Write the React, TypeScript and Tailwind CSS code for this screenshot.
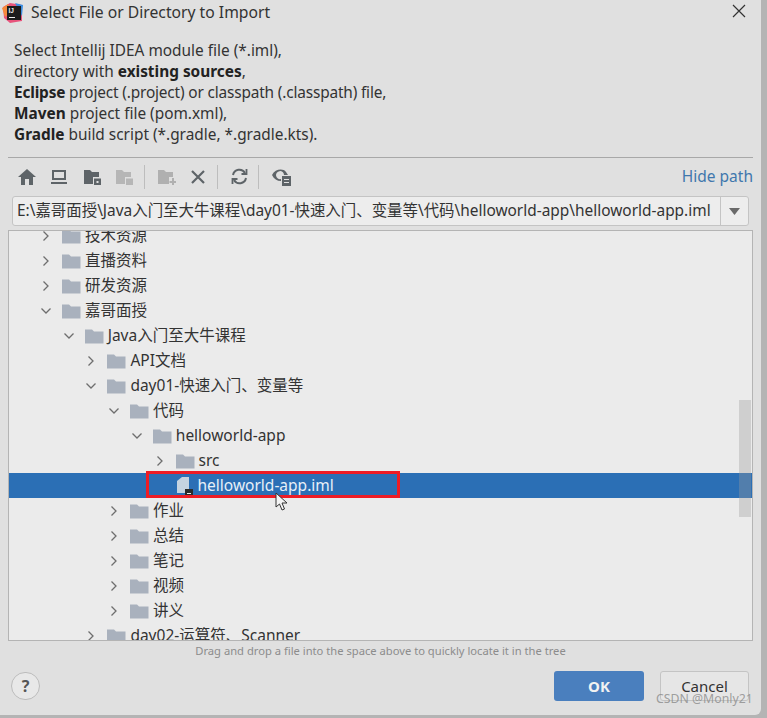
import React from "react";

const font = { fontFamily: '"Noto Sans", "Noto Sans CJK SC", sans-serif' };

const Folder = ({ x = 0 }: { x?: number }) => (
  <svg width="19" height="16" viewBox="0 0 19 16" className="shrink-0" style={{ marginLeft: x }}>
    <path d="M0 1.5 H7 L9 3.5 H18.5 V15.5 H0 Z" fill="#a9b1bd" />
  </svg>
);

const Chevron = ({ open }: { open: boolean }) => (
  <svg width="12" height="12" viewBox="0 0 12 12" className="shrink-0" fill="none" stroke="#6e6e6e" strokeWidth="1.3">
    {open ? <path d="M1.5 3.5 L6 8 L10.5 3.5" /> : <path d="M3.5 1.5 L8 6 L3.5 10.5" />}
  </svg>
);

type Row = { t: string; l: number; open?: boolean; file?: boolean; sel?: boolean };
const rows: Row[] = [
  { t: "技术资源", l: 0 },
  { t: "直播资料", l: 0 },
  { t: "研发资源", l: 0 },
  { t: "嘉哥面授", l: 0, open: true },
  { t: "Java入门至大牛课程", l: 1, open: true },
  { t: "API文档", l: 2 },
  { t: "day01-快速入门、变量等", l: 2, open: true },
  { t: "代码", l: 3, open: true },
  { t: "helloworld-app", l: 4, open: true },
  { t: "src", l: 5 },
  { t: "helloworld-app.iml", l: 5, file: true, sel: true },
  { t: "作业", l: 3 },
  { t: "总结", l: 3 },
  { t: "笔记", l: 3 },
  { t: "视频", l: 3 },
  { t: "讲义", l: 3 },
  { t: "day02-运算符、Scanner", l: 2 },
];

const TreeRow = ({ r }: { r: Row }) => (
  <div className={`h-[25px] flex items-center text-[15.5px] ${r.sel ? "bg-[#2b6fb5] text-[#e8f0f8]" : "text-[#333]"}`} style={{ paddingLeft: 31 + r.l * 22.7 }}>
    <div className="w-[12px] shrink-0">{!r.file && <Chevron open={!!r.open} />}</div>
    {r.file ? (
      <svg width="19" height="20" viewBox="0 0 19 20" className="ml-[10px] shrink-0">
        <path d="M1 5 L6 1 H13 V17 H1 Z" fill="#c5d3e0" />
        <rect x="9" y="13" width="8" height="7" fill="#2b2b2b" />
        <rect x="11" y="17" width="4" height="1" fill="#eee" />
      </svg>
    ) : (
      <div className="ml-[10px]"><Folder /></div>
    )}
    <span className={`whitespace-nowrap ${r.file ? "ml-[3px]" : "ml-[4px]"}`}>{r.t}</span>
  </div>
);

const Sep = () => <div className="w-px h-[24px] bg-[#bdbdbd] shrink-0" />;

const Bold = ({ children }: { children: React.ReactNode }) => <b className="font-bold text-[#222]">{children}</b>;

export default function App() {
  return (
    <div className="w-[767px] h-[718px] bg-[#b4b4b4] overflow-hidden" style={font}>
      <div className="relative w-[761px] h-[715px] bg-[#e0e0e0] rounded-br-[6px] flex flex-col">
        {/* title */}
        <div className="h-[25px] flex items-center shrink-0">
          <svg width="21" height="20" viewBox="0 0 21 20" className="ml-[2px] shrink-0">
            <path d="M1 4 L8 0 L20 2 L20 18 L8 20 L2 15 Z" fill="#e8547c" />
            <path d="M0 5 L6 1 L10 8 L3 14 Z" fill="#f58a3c" />
            <path d="M13 0 L21 2 L20 13 Z" fill="#3b8de0" />
            <rect x="5" y="3" width="14" height="14" fill="#1c1c1c" />
            <rect x="7" y="14" width="6" height="1" fill="#eee" />
            <text x="6.5" y="10" fontSize="6.5" fontWeight="700" fill="#eee" fontFamily="Liberation Sans, sans-serif">IJ</text>
          </svg>
          <span className="ml-[8px] text-[15.7px] text-[#333] whitespace-nowrap">Select File or Directory to Import</span>
          <svg width="14" height="14" viewBox="0 0 14 14" className="ml-auto mr-[15px] mt-[-4px]" fill="none" stroke="#333" strokeWidth="1.2">
            <path d="M1 1 L13 13 M13 1 L1 13" />
          </svg>
        </div>
        {/* description */}
        <div className="pl-[14px] pt-[15px] text-[15.4px] leading-[21px] text-[#333] h-[132px] shrink-0 whitespace-nowrap">
          <div>Select Intellij IDEA module file (*.iml),</div>
          <div>directory with <Bold>existing sources</Bold>,</div>
          <div className="tracking-[-0.16px]"><Bold>Eclipse</Bold> project (.project) or classpath (.classpath) file,</div>
          <div><Bold>Maven</Bold> project file (pom.xml),</div>
          <div><Bold>Gradle</Bold> build script (*.gradle, *.gradle.kts).</div>
        </div>
        {/* toolbar */}
        <div className="mx-[8px] w-[745px] h-[38px] border-t border-[#a8a8a8] flex items-center shrink-0 pl-[10px]">
          <svg width="18" height="16" viewBox="0 0 18 16" className="shrink-0"><path d="M9 0 L18 8 H15 V16 H11 V10 H7 V16 H3 V8 H0 Z" fill="#5e6468" /></svg>
          <svg width="16" height="16" viewBox="0 0 16 16" className="ml-[15px] shrink-0"><path d="M1 1 H15 V11 H1 Z M3 3 V9 H13 V3 Z M0 13 H16 V15 H0 Z" fill="#5e6468" fillRule="evenodd" /></svg>
          <svg width="17" height="16" viewBox="0 0 17 16" className="ml-[17px] shrink-0"><path d="M0 1 H6 L8 3 H15 V8 H9 V15 H0 Z" fill="#5e6468" /><path d="M10 9.5 H17 V16 H10 Z M12.5 12 V14 H14.5 V12 Z" fill="#5e6468" fillRule="evenodd" /></svg>
          <svg width="17" height="16" viewBox="0 0 17 16" className="ml-[15px] shrink-0"><path d="M0 1 H6 L8 3 H15 V8 H9 V15 H0 Z" fill="#b6b6b6" /><path d="M10 9.5 H17 V16 H10 Z" fill="#b6b6b6" /></svg>
          <div className="ml-[11px]"><Sep /></div>
          <svg width="18" height="16" viewBox="0 0 18 16" className="ml-[13px] shrink-0"><path d="M0 1 H6 L8 3 H15 V8 H11 V15 H0 Z" fill="#b0b0b0" /><path d="M14 9 H16 V12 H18 V14 H16 V16.5 H14 V14 H11.5 V12 H14 Z" fill="#b0b0b0" /></svg>
          <svg width="14" height="14" viewBox="0 0 14 14" className="ml-[15px] shrink-0" fill="none" stroke="#5e6468" strokeWidth="2.2"><path d="M1 1 L13 13 M13 1 L1 13" /></svg>
          <div className="ml-[12px]"><Sep /></div>
          <svg width="17" height="17" viewBox="0 0 17 17" className="ml-[13px] shrink-0" fill="none" stroke="#5e6468" strokeWidth="2">
            <path d="M2 7 A6.5 6.5 0 0 1 14 5" />
            <path d="M15 10 A6.5 6.5 0 0 1 3 12" />
            <path d="M15.5 1 V6 H10.5" strokeWidth="1.8" />
            <path d="M1.5 16 V11 H6.5" strokeWidth="1.8" />
          </svg>
          <div className="ml-[10px]"><Sep /></div>
          <svg width="20" height="18" viewBox="0 0 20 18" className="ml-[13px] shrink-0">
            <path d="M0 7 C3 1 11 0 14 4 L16 7 H12 A4 4 0 1 0 9 11 V13 C5 13 2 11 0 7 Z" fill="#5e6468" />
            <path d="M10 8 H19 V18 H10 Z M12 11 V12 H17 V11 Z M12 14 V15 H17 V14 Z" fill="#5e6468" fillRule="evenodd" />
          </svg>
          <span className="ml-auto text-[15.5px] text-[#3f77ad] whitespace-nowrap">Hide path</span>
        </div>
        {/* path */}
        <div className="ml-[12px] w-[737px] h-[30px] mt-[1px] shrink-0 bg-[#ededed] border border-[#c4c4c4] rounded-[3px] flex items-center">
          <span className="flex-1 pl-[4px] text-[15.43px] text-[#333] whitespace-nowrap overflow-hidden">E:\嘉哥面授\Java入门至大牛课程\day01-快速入门、变量等\代码\helloworld-app\helloworld-app.iml</span>
          <div className="w-[28px] h-full border-l border-[#c4c4c4] flex items-center justify-center shrink-0">
            <svg width="11" height="7" viewBox="0 0 11 7"><path d="M0 0 H11 L5.5 7 Z" fill="#6a6a6a" /></svg>
          </div>
        </div>
        {/* tree */}
        <div className="relative ml-[8px] w-[745px] h-[411px] mt-[4px] shrink-0 bg-[#ebebeb] border border-[#b4b4b4] overflow-hidden">
          <div className="mt-[-8px]">
            {rows.map((r) => <TreeRow key={r.t} r={r} />)}
          </div>
          <div className="absolute left-[730px] top-[169px] w-[12px] h-[117px] bg-[#9a9a9a]/35" />
          <div className="absolute left-[137px] top-[240px] w-[254px] h-[27px] border-[3px] border-[#ee1c25]" />
          <svg width="14" height="20" viewBox="0 0 14 20" className="absolute left-[266px] top-[261px]">
            <path d="M1 1 V15 L4.5 12 L7 18 L9.5 17 L7 11 H12 Z" fill="#f4f4f4" stroke="#333" strokeWidth="1" />
          </svg>
        </div>
        {/* hint */}
        <div className="h-[20px] flex items-center justify-center shrink-0 text-[11.2px] text-[#8c8c8c] whitespace-nowrap">
          Drag and drop a file into the space above to quickly locate it in the tree
        </div>
        {/* footer */}
        <div className="flex items-start mt-[10px] pl-[11px] pr-[12px]">
          <div className="w-[29px] h-[28px] mt-[1px] rounded-full border border-[#bcbcbc] bg-[#e8e8e8] flex items-center justify-center text-[16px] font-bold text-[#555]">?</div>
          <div className="ml-auto w-[90px] h-[30px] rounded-[3px] bg-[#4a7fbe] flex items-center justify-center text-[15px] font-bold text-[#f2f2f2]">OK</div>
          <div className="ml-[16px] w-[89px] h-[30px] rounded-[3px] border border-[#c4c4c4] bg-[#e6e6e6] flex items-center justify-center text-[15px] text-[#333]">Cancel</div>
        </div>
        <div className="absolute left-[656px] top-[692px] text-[12.3px] leading-[14px] text-[#8a8a8a]/80 whitespace-nowrap">CSDN @Monly21</div>
      </div>
    </div>
  );
}
